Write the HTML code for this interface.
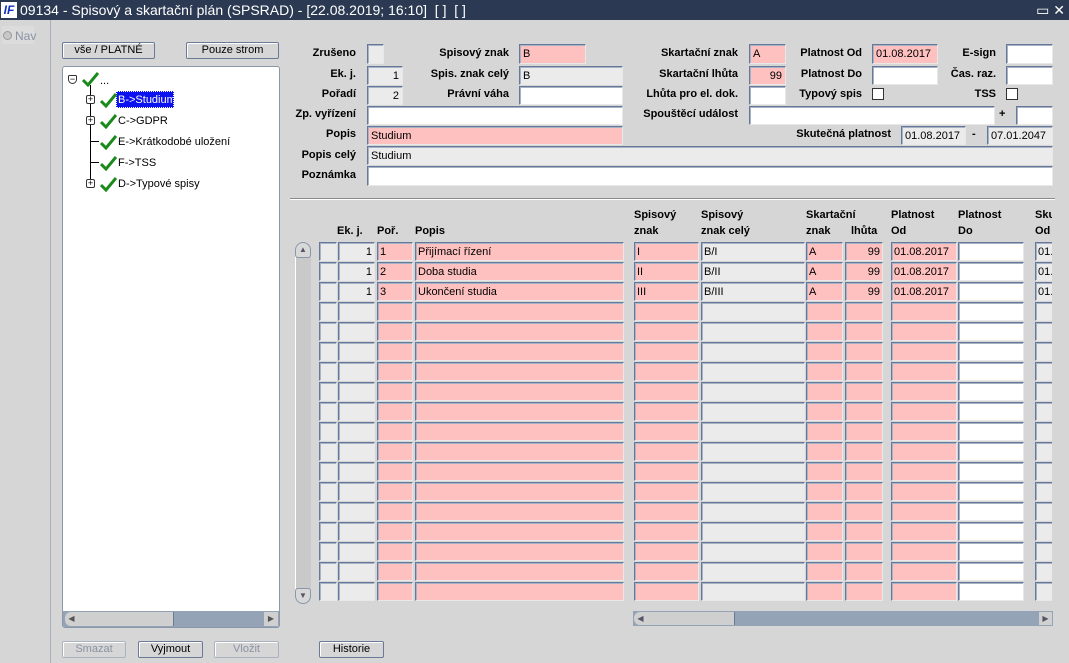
<!DOCTYPE html>
<html><head><meta charset="utf-8"><style>
*{box-sizing:border-box;margin:0;padding:0}
body{width:1069px;height:663px;background:#d6d6d6;font-family:"Liberation Sans",Arial,sans-serif;font-size:12px;position:relative;overflow:hidden;color:#000}
.a{position:absolute}
.tb{left:0;top:0;width:1069px;height:20px;background:#2b3a52;color:#fff;font-size:14px;line-height:20px;padding-left:20px;white-space:pre}
.f{position:absolute;border:1px solid;border-color:#66789a #e8e8e8 #e8e8e8 #66789a;box-shadow:inset 1px 1px 0 #a7b2c4;background:#fff;font-size:11px;line-height:18px;padding:0 3px;white-space:nowrap;overflow:hidden}
.p{background:#ffc0c0}.g{background:#ebebeb}.w{background:#fff}
.rt{text-align:right}
.l{position:absolute;font-weight:bold;font-size:11px;text-align:right;white-space:nowrap}
.btn{position:absolute;height:17px;border:1px solid #6a7a96;border-radius:2px;background:#d6d6d6;font-size:11px;text-align:center;line-height:15px;box-shadow:inset 1px 1px 0 #fff}
.dis{color:#8a93a4;border-color:#aab2c0}
.r{position:absolute;left:0;height:20px;width:1052px;overflow:hidden}
.r b{position:absolute;top:0;height:19px;border:1px solid;border-color:#66789a #e8e8e8 #e8e8e8 #66789a;box-shadow:inset 1px 1px 0 #a7b2c4;font-weight:normal;font-size:11px;line-height:18px;padding:0 2px;white-space:nowrap;overflow:hidden}
.c1{left:319px;width:18px;background:#ebebeb}
.c2{left:338px;width:37px;background:#ebebeb;text-align:right}
.c3{left:377px;width:36px;background:#ffc0c0}
.c4{left:415px;width:209px;background:#ffc0c0}
.c5{left:634px;width:65px;background:#ffc0c0}
.c6{left:701px;width:104px;background:#ebebeb}
.c7{left:806px;width:37px;background:#ffc0c0}
.c8{left:845px;width:38px;background:#ffc0c0;text-align:right}
.c9{left:891px;width:66px;background:#ffc0c0}
.c10{left:958px;width:66px;background:#fff}
.c11{left:1035px;width:40px;background:#ebebeb}
.h{position:absolute;font-weight:bold;font-size:11px;line-height:16px}
.ti{position:absolute;font-size:11px;white-space:nowrap}
.ck{position:absolute;width:17px;height:15px}
.pl{position:absolute;width:9px;height:9px;border:1px solid #333;border-radius:2px;background:#fff;font-size:9px;line-height:7px;text-align:center}
</style></head><body>
<svg width="0" height="0" style="position:absolute"><defs><symbol id="ck" viewBox="0 0 17 15"><path d="M1 8 L6 13 L16 1" fill="none" stroke="#1a8a1a" stroke-width="3"/></symbol></defs></svg>
<div class="a tb">09134 - Spisový a skartační plán (SPSRAD) - [22.08.2019; 16:10]  [ ]  [ ]</div>
<div class="a" style="left:1px;top:2px;width:16px;height:16px;background:#fff;color:#1030c0;font:bold italic 12px/16px 'Liberation Sans';text-align:center">IF</div>
<div class="a" style="right:4px;top:0;color:#fff;font-size:14px;line-height:20px">▭ ✕</div>
<div class="a" style="left:50px;top:20px;width:1px;height:643px;background:#a8b0be"></div>
<div class="a" style="left:2px;top:26px;width:32px;height:18px;background:#dcdcdc"></div>
<div class="a" style="left:3px;top:31px;width:9px;height:9px;border-radius:50%;border:1px solid #999;background:#c8c8c8"></div>
<div class="a" style="left:15px;top:29px;color:#8a93a4;font-size:12px">Nav</div>

<div class="btn" style="left:62px;top:42px;width:93px">vše / PLATNÉ</div>
<div class="btn" style="left:186px;top:42px;width:93px">Pouze strom</div>

<div class="a" style="left:62px;top:66px;width:218px;height:562px;background:#fff;border:1px solid #8a96aa;border-radius:3px;overflow:hidden">
 <div class="a" style="left:27px;top:18px;width:1px;height:100px;background:#000"></div>
 <div class="pl" style="left:5px;top:8px;border-radius:2px 2px 6px 6px">−</div>
 <svg class="ck" style="left:19px;top:5px"><use href="#ck"/></svg><div class="ti" style="left:37px;top:8px">...</div>
 <div class="a" style="left:53px;top:24px;width:58px;height:17px;background:#0b12f0;border:1px dotted #fff"></div>
 <div class="pl" style="left:23px;top:28px">+</div><svg class="ck" style="left:37px;top:26px"><use href="#ck"/></svg><div class="ti" style="left:55px;top:27px;color:#fff">B-&gt;Studium</div>
 <div class="pl" style="left:23px;top:49px">+</div><svg class="ck" style="left:37px;top:47px"><use href="#ck"/></svg><div class="ti" style="left:55px;top:48px">C-&gt;GDPR</div>
 <div class="a" style="left:28px;top:74px;width:8px;height:1px;background:#000"></div><svg class="ck" style="left:37px;top:68px"><use href="#ck"/></svg><div class="ti" style="left:55px;top:69px">E-&gt;Krátkodobé uložení</div>
 <div class="a" style="left:28px;top:95px;width:8px;height:1px;background:#000"></div><svg class="ck" style="left:37px;top:89px"><use href="#ck"/></svg><div class="ti" style="left:55px;top:90px">F-&gt;TSS</div>
 <div class="pl" style="left:23px;top:112px">+</div><svg class="ck" style="left:37px;top:110px"><use href="#ck"/></svg><div class="ti" style="left:55px;top:111px">D-&gt;Typové spisy</div>
 <div class="a" style="left:0;top:544px;width:216px;height:16px;background:#94a3b6"></div>
 <div class="a" style="left:2px;top:545px;width:13px;height:14px;background:#d0d0d0;border-radius:6px 0 0 6px;font-size:8px;color:#555;text-align:center;line-height:14px">◀</div>
 <div class="a" style="left:15px;top:545px;width:96px;height:14px;background:#cfcfcf;border-right:1px solid #6a7a96"></div>
 <div class="a" style="left:201px;top:545px;width:14px;height:14px;background:#d0d0d0;font-size:8px;color:#555;text-align:center;line-height:14px">▶</div>
</div>

<div class="btn dis" style="left:62px;top:641px;width:64px">Smazat</div>
<div class="btn" style="left:138px;top:641px;width:65px">Vyjmout</div>
<div class="btn dis" style="left:214px;top:641px;width:65px">Vložit</div>
<div class="btn" style="left:319px;top:641px;width:65px">Historie</div>

<div class="l" style="right:713px;top:47px">Zrušeno</div><div class="f g" style="left:367px;top:44px;width:17px;height:20px"></div>
<div class="l" style="right:713px;top:68px">Ek. j.</div><div class="f g rt" style="left:367px;top:66px;width:36px;height:19px">1</div>
<div class="l" style="right:713px;top:88px">Pořadí</div><div class="f g rt" style="left:367px;top:86px;width:36px;height:19px">2</div>
<div class="l" style="right:713px;top:108px">Zp. vyřízení</div><div class="f w" style="left:367px;top:106px;width:256px;height:19px"></div>
<div class="l" style="right:713px;top:128px">Popis</div><div class="f p" style="left:367px;top:126px;width:256px;height:19px">Studium</div>
<div class="l" style="right:713px;top:149px">Popis celý</div><div class="f g" style="left:367px;top:146px;width:686px;height:19px">Studium</div>
<div class="l" style="right:713px;top:169px">Poznámka</div><div class="f w" style="left:367px;top:166px;width:686px;height:20px"></div>

<div class="l" style="right:560px;top:47px">Spisový znak</div><div class="f p" style="left:519px;top:44px;width:67px;height:20px">B</div>
<div class="l" style="right:560px;top:68px">Spis. znak celý</div><div class="f g" style="left:519px;top:66px;width:104px;height:19px">B</div>
<div class="l" style="right:560px;top:88px">Právní váha</div><div class="f w" style="left:519px;top:86px;width:104px;height:19px"></div>

<div class="l" style="right:331px;top:47px">Skartační znak</div><div class="f p" style="left:749px;top:44px;width:37px;height:20px">A</div>
<div class="l" style="right:331px;top:68px">Skartační lhůta</div><div class="f p rt" style="left:749px;top:66px;width:37px;height:19px">99</div>
<div class="l" style="right:331px;top:88px">Lhůta pro el. dok.</div><div class="f w" style="left:749px;top:86px;width:37px;height:19px"></div>
<div class="l" style="right:331px;top:108px">Spouštěcí událost</div><div class="f w" style="left:749px;top:106px;width:246px;height:19px"></div>
<div class="l" style="left:999px;top:108px">+</div><div class="f w" style="left:1016px;top:106px;width:37px;height:19px"></div>

<div class="l" style="right:207px;top:47px">Platnost Od</div><div class="f p" style="left:872px;top:44px;width:66px;height:20px">01.08.2017</div>
<div class="l" style="right:207px;top:68px">Platnost Do</div><div class="f w" style="left:872px;top:66px;width:66px;height:19px"></div>
<div class="l" style="right:207px;top:88px">Typový spis</div><div class="a" style="left:872px;top:88px;width:12px;height:12px;background:#fff;border:1px solid #333"></div>
<div class="l" style="right:73px;top:47px">E-sign</div><div class="f w" style="left:1006px;top:44px;width:47px;height:20px"></div>
<div class="l" style="right:73px;top:68px">Čas. raz.</div><div class="f w" style="left:1006px;top:66px;width:47px;height:19px"></div>
<div class="l" style="right:73px;top:88px">TSS</div><div class="a" style="left:1006px;top:88px;width:12px;height:12px;background:#fff;border:1px solid #333"></div>
<div class="l" style="right:178px;top:128px">Skutečná platnost</div><div class="f g" style="left:901px;top:126px;width:65px;height:19px">01.08.2017</div>
<div class="l" style="left:972px;top:128px">-</div><div class="f g" style="left:987px;top:126px;width:66px;height:19px">07.01.2047</div>

<div class="a" style="left:290px;top:198px;width:765px;height:2px;border-top:1px solid #8a8a8a;border-bottom:1px solid #fff"></div>

<div class="h" style="left:337px;top:223px">Ek. j.</div>
<div class="h" style="left:377px;top:223px">Poř.</div>
<div class="h" style="left:415px;top:223px">Popis</div>
<div class="h" style="left:634px;top:207px">Spisový<br>znak</div>
<div class="h" style="left:701px;top:207px">Spisový<br>znak celý</div>
<div class="h" style="left:806px;top:207px">Skartační<br>znak</div>
<div class="h" style="left:851px;top:223px">lhůta</div>
<div class="h" style="left:891px;top:207px">Platnost<br>Od</div>
<div class="h" style="left:958px;top:207px">Platnost<br>Do</div>
<div class="h" style="left:1035px;top:207px;width:17px;overflow:hidden">Skut<br>Od</div>

<div class="a" style="left:295px;top:242px;width:16px;height:362px;background:#c9c9c9;border-left:1px solid #fff;border-radius:8px"></div>
<div class="a" style="left:295px;top:242px;width:16px;height:16px;border:1px solid #8a96aa;border-radius:8px 8px 3px 3px;background:#d8d8d8;font-size:8px;color:#556;text-align:center;line-height:14px">▲</div>
<div class="a" style="left:295px;top:588px;width:16px;height:16px;border:1px solid #8a96aa;border-radius:3px 3px 8px 8px;background:#d8d8d8;font-size:8px;color:#556;text-align:center;line-height:14px">▼</div>

<div class="r" style="top:242px"><b class="c1"></b><b class="c2">1</b><b class="c3">1</b><b class="c4">Přijímací řízení</b><b class="c5">I</b><b class="c6">B/I</b><b class="c7">A</b><b class="c8">99</b><b class="c9">01.08.2017</b><b class="c10"></b><b class="c11">01.08.2017</b></div>
<div class="r" style="top:262px"><b class="c1"></b><b class="c2">1</b><b class="c3">2</b><b class="c4">Doba studia</b><b class="c5">II</b><b class="c6">B/II</b><b class="c7">A</b><b class="c8">99</b><b class="c9">01.08.2017</b><b class="c10"></b><b class="c11">01.08.2017</b></div>
<div class="r" style="top:282px"><b class="c1"></b><b class="c2">1</b><b class="c3">3</b><b class="c4">Ukončení studia</b><b class="c5">III</b><b class="c6">B/III</b><b class="c7">A</b><b class="c8">99</b><b class="c9">01.08.2017</b><b class="c10"></b><b class="c11">01.08.2017</b></div>
<div class="r" style="top:302px"><b class="c1"></b><b class="c2"></b><b class="c3"></b><b class="c4"></b><b class="c5"></b><b class="c6"></b><b class="c7"></b><b class="c8"></b><b class="c9"></b><b class="c10"></b><b class="c11"></b></div>
<div class="r" style="top:322px"><b class="c1"></b><b class="c2"></b><b class="c3"></b><b class="c4"></b><b class="c5"></b><b class="c6"></b><b class="c7"></b><b class="c8"></b><b class="c9"></b><b class="c10"></b><b class="c11"></b></div>
<div class="r" style="top:342px"><b class="c1"></b><b class="c2"></b><b class="c3"></b><b class="c4"></b><b class="c5"></b><b class="c6"></b><b class="c7"></b><b class="c8"></b><b class="c9"></b><b class="c10"></b><b class="c11"></b></div>
<div class="r" style="top:362px"><b class="c1"></b><b class="c2"></b><b class="c3"></b><b class="c4"></b><b class="c5"></b><b class="c6"></b><b class="c7"></b><b class="c8"></b><b class="c9"></b><b class="c10"></b><b class="c11"></b></div>
<div class="r" style="top:382px"><b class="c1"></b><b class="c2"></b><b class="c3"></b><b class="c4"></b><b class="c5"></b><b class="c6"></b><b class="c7"></b><b class="c8"></b><b class="c9"></b><b class="c10"></b><b class="c11"></b></div>
<div class="r" style="top:402px"><b class="c1"></b><b class="c2"></b><b class="c3"></b><b class="c4"></b><b class="c5"></b><b class="c6"></b><b class="c7"></b><b class="c8"></b><b class="c9"></b><b class="c10"></b><b class="c11"></b></div>
<div class="r" style="top:422px"><b class="c1"></b><b class="c2"></b><b class="c3"></b><b class="c4"></b><b class="c5"></b><b class="c6"></b><b class="c7"></b><b class="c8"></b><b class="c9"></b><b class="c10"></b><b class="c11"></b></div>
<div class="r" style="top:442px"><b class="c1"></b><b class="c2"></b><b class="c3"></b><b class="c4"></b><b class="c5"></b><b class="c6"></b><b class="c7"></b><b class="c8"></b><b class="c9"></b><b class="c10"></b><b class="c11"></b></div>
<div class="r" style="top:462px"><b class="c1"></b><b class="c2"></b><b class="c3"></b><b class="c4"></b><b class="c5"></b><b class="c6"></b><b class="c7"></b><b class="c8"></b><b class="c9"></b><b class="c10"></b><b class="c11"></b></div>
<div class="r" style="top:482px"><b class="c1"></b><b class="c2"></b><b class="c3"></b><b class="c4"></b><b class="c5"></b><b class="c6"></b><b class="c7"></b><b class="c8"></b><b class="c9"></b><b class="c10"></b><b class="c11"></b></div>
<div class="r" style="top:502px"><b class="c1"></b><b class="c2"></b><b class="c3"></b><b class="c4"></b><b class="c5"></b><b class="c6"></b><b class="c7"></b><b class="c8"></b><b class="c9"></b><b class="c10"></b><b class="c11"></b></div>
<div class="r" style="top:522px"><b class="c1"></b><b class="c2"></b><b class="c3"></b><b class="c4"></b><b class="c5"></b><b class="c6"></b><b class="c7"></b><b class="c8"></b><b class="c9"></b><b class="c10"></b><b class="c11"></b></div>
<div class="r" style="top:542px"><b class="c1"></b><b class="c2"></b><b class="c3"></b><b class="c4"></b><b class="c5"></b><b class="c6"></b><b class="c7"></b><b class="c8"></b><b class="c9"></b><b class="c10"></b><b class="c11"></b></div>
<div class="r" style="top:562px"><b class="c1"></b><b class="c2"></b><b class="c3"></b><b class="c4"></b><b class="c5"></b><b class="c6"></b><b class="c7"></b><b class="c8"></b><b class="c9"></b><b class="c10"></b><b class="c11"></b></div>
<div class="r" style="top:582px"><b class="c1"></b><b class="c2"></b><b class="c3"></b><b class="c4"></b><b class="c5"></b><b class="c6"></b><b class="c7"></b><b class="c8"></b><b class="c9"></b><b class="c10"></b><b class="c11"></b></div>

<div class="a" style="left:633px;top:611px;width:420px;height:15px;background:#94a3b6"></div>
<div class="a" style="left:634px;top:612px;width:13px;height:13px;background:#d0d0d0;border-radius:6px 0 0 6px;font-size:8px;color:#556;text-align:center;line-height:13px">◀</div>
<div class="a" style="left:647px;top:612px;width:88px;height:13px;background:#cfcfcf;border-right:1px solid #6a7a96"></div>
<div class="a" style="left:1039px;top:612px;width:13px;height:13px;background:#d0d0d0;font-size:8px;color:#556;text-align:center;line-height:13px">▶</div>
</body></html>
